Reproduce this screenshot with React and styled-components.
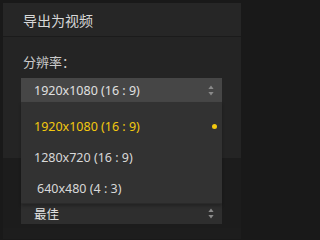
import React, { useState } from "react";
import styled, { createGlobalStyle } from "styled-components";

const GlobalStyle = createGlobalStyle`
  html, body {
    margin: 0;
    padding: 0;
    background: #191919;
  }
  body {
    font-family: "Noto Sans", "Noto Sans CJK SC", sans-serif;
  }
`;

const Page = styled.div`
  width: 243px;
  height: 239px;
  box-sizing: border-box;
  padding: 3px 2px 0 3px;
  background: #191919;
  overflow: hidden;
`;

const Panel = styled.div`
  position: relative;
  width: 238px;
  height: 236px;
  display: flex;
  flex-direction: column;
  background: #1d1d1d;
`;

const Header = styled.div`
  height: 33px;
  display: flex;
  align-items: center;
  padding-left: 20px;
  background: #262626;
  border-bottom: 1px solid #1b1b1b;
  color: #d8d8d8;
  font-size: 14px;
`;

const Section = styled.div`
  background: ${({ tone }) => tone};
  height: ${({ h }) => h}px;
  box-sizing: border-box;
  padding: ${({ pad }) => pad};
  display: flex;
  flex-direction: column;
`;

const Label = styled.div`
  color: #cbcbcb;
  font-size: 13px;
  height: 20px;
  line-height: 20px;
  padding-left: 2px;
  margin-bottom: 6px;
`;

const SelectBox = styled.div`
  position: relative;
  width: 201px;
  height: ${({ h }) => h}px;
  box-sizing: border-box;
  display: flex;
  align-items: center;
  justify-content: space-between;
  padding: 0 8px 0 13px;
  background: ${({ bg }) => bg};
  color: #e0e0e0;
  font-size: 12.5px;
`;

const Arrows = styled.svg`
  width: 6px;
  height: 11px;
  flex-shrink: 0;
`;

const Menu = styled.div`
  position: absolute;
  left: 18px;
  top: 99px;
  width: 201px;
  height: 102px;
  box-sizing: border-box;
  padding-top: 9px;
  background: #323232;
  border-bottom: 1px solid #2a2a2a;
  box-shadow: 0 2px 3px rgba(0, 0, 0, 0.25);
  overflow: hidden;
  z-index: 2;
`;

const Item = styled.div`
  height: 31px;
  display: flex;
  align-items: center;
  justify-content: space-between;
  padding: 0 5px 0 ${({ indent }) => 13 + indent}px;
  color: ${({ active }) => (active ? "#f2c80f" : "#d8d8d8")};
  font-size: 12.5px;
`;

const Dot = styled.span`
  width: 5px;
  height: 5px;
  border-radius: 50%;
  background: #f2c80f;
`;

const UpDown = () => (
  <Arrows viewBox="0 0 6 11">
    <path d="M3 0.5 L5.6 4 L0.4 4 Z" fill="#8a8a8a" />
    <path d="M3 10.5 L5.6 7 L0.4 7 Z" fill="#8a8a8a" />
  </Arrows>
);

const options = [
  { label: "1920x1080 (16 : 9)", indent: 0 },
  { label: "1280x720 (16 : 9)", indent: 0 },
  { label: "640x480 (4 : 3)", indent: 3 },
];

export default function App() {
  const [current] = useState(0);

  return (
    <>
      <GlobalStyle />
      <Page>
        <Panel>
          <Header>导出为视频</Header>
          <Section tone="#242424" h={121} pad="15px 0 0 18px">
            <Label>分辨率：</Label>
            <SelectBox bg="#464646" h={24}>
              <span>{options[current].label}</span>
              <UpDown />
            </SelectBox>
          </Section>
          <Section tone="#1c1c1c" h={70} pad="44px 0 0 18px">
            <SelectBox bg="#2e2e2e" h={22}>
              <span>最佳</span>
              <UpDown />
            </SelectBox>
          </Section>
          <Menu>
            {options.map((o, i) => (
              <Item key={o.label} active={i === current} indent={o.indent}>
                <span>{o.label}</span>
                {i === current && <Dot />}
              </Item>
            ))}
          </Menu>
        </Panel>
      </Page>
    </>
  );
}
